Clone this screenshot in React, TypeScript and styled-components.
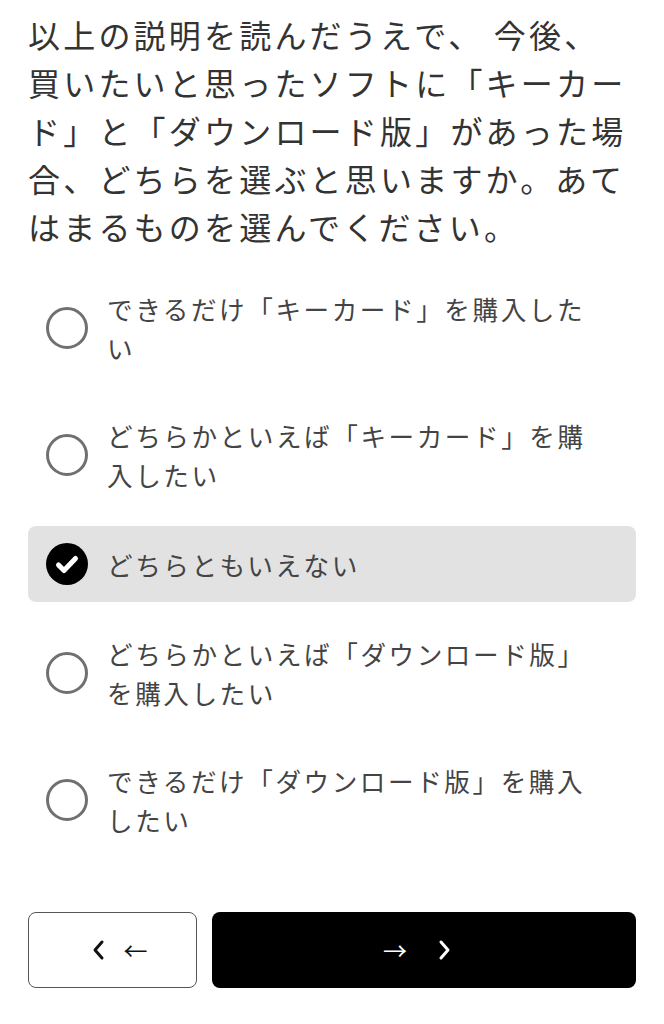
import React, { useState } from "react";
import styled, { createGlobalStyle } from "styled-components";

const Global = createGlobalStyle`
  html, body { margin: 0; padding: 0; background: #ffffff; }
  body { font-family: "Noto Sans CJK JP", "Noto Sans", sans-serif; }
  * { box-sizing: border-box; }
`;

const Page = styled.div`
  width: 664px;
  padding: 10px 28px 36px;
  display: flex;
  flex-direction: column;
`;

const Question = styled.h1`
  margin: 0;
  font-size: 32px;
  line-height: 48px;
  letter-spacing: 3.2px;
  font-weight: 400;
  color: #333333;
  white-space: nowrap;
`;

const Options = styled.div`
  margin-top: 22px;
  display: flex;
  flex-direction: column;
  gap: 15px;
`;

const OptionRow = styled.label<{ $selected: boolean }>`
  display: flex;
  align-items: center;
  gap: 19px;
  padding: 17px 37px 17px 18px;
  border-radius: 8px;
  background: ${(p) => (p.$selected ? "#e2e2e2" : "transparent")};
  cursor: pointer;
`;

const RadioRing = styled.span`
  flex: 0 0 42px;
  width: 42px;
  height: 42px;
  border-radius: 50%;
  border: 3px solid #707070;
`;

const CheckIcon = styled.svg`
  flex: 0 0 42px;
  width: 42px;
  height: 42px;
  display: block;
`;

const OptionText = styled.span`
  flex: 1;
  font-size: 25.6px;
  line-height: 39px;
  letter-spacing: 2.56px;
  color: #444444;
`;

const ButtonBar = styled.div`
  margin-top: 56px;
  display: grid;
  grid-template-columns: 169px 1fr;
  gap: 15px;
`;

const NavButton = styled.button<{ $primary?: boolean; $gap: number }>`
  height: 76px;
  border-radius: 8px;
  border: ${(p) => (p.$primary ? "none" : "1.5px solid #555555")};
  background: ${(p) => (p.$primary ? "#000000" : "#ffffff")};
  color: ${(p) => (p.$primary ? "#ffffff" : "#111111")};
  display: flex;
  align-items: center;
  justify-content: center;
  gap: ${(p) => p.$gap}px;
  font-family: "Noto Sans CJK JP", sans-serif;
  cursor: pointer;
  padding: ${(p) => (p.$primary ? "0 14px 0 0" : "0 0 0 14px")};
`;

const Arrow = styled.span`
  font-size: 24px;
  line-height: 1;
  font-weight: 400;
`;

const Chevron = styled.svg`
  width: 14px;
  height: 22px;
  display: block;
`;

const options = [
  "できるだけ「キーカード」を購入したい",
  "どちらかといえば「キーカード」を購入したい",
  "どちらともいえない",
  "どちらかといえば「ダウンロード版」を購入したい",
  "できるだけ「ダウンロード版」を購入したい",
];

export default function App() {
  const [selected, setSelected] = useState(2);
  return (
    <>
      <Global />
      <Page>
        <Question>
          以上の説明を読んだうえで、 今後、
          <br />
          買いたいと思ったソフトに「キーカー
          <br />
          ド」と「ダウンロード版」があった場
          <br />
          合、どちらを選ぶと思いますか。あて
          <br />
          はまるものを選んでください。
        </Question>
        <Options>
          {options.map((o, i) => (
            <OptionRow key={i} $selected={selected === i} onClick={() => setSelected(i)}>
              {selected === i ? (
                <CheckIcon viewBox="0 0 42 42">
                  <circle cx="21" cy="21" r="21" fill="#000" />
                  <polyline
                    points="12.5,22 18,27.5 29.5,15.5"
                    fill="none"
                    stroke="#fff"
                    strokeWidth="5"
                    strokeLinecap="round"
                    strokeLinejoin="round"
                  />
                </CheckIcon>
              ) : (
                <RadioRing />
              )}
              <OptionText>{o}</OptionText>
            </OptionRow>
          ))}
        </Options>
        <ButtonBar>
          <NavButton $gap={18}>
            <Chevron viewBox="0 0 14 22">
              <polyline points="10,3 3,11 10,19" fill="none" stroke="currentColor" strokeWidth="3" strokeLinecap="round" strokeLinejoin="round" />
            </Chevron>
            <Arrow>←</Arrow>
          </NavButton>
          <NavButton $primary $gap={30}>
            <Arrow>→</Arrow>
            <Chevron viewBox="0 0 14 22">
              <polyline points="4,3 11,11 4,19" fill="none" stroke="currentColor" strokeWidth="3" strokeLinecap="round" strokeLinejoin="round" />
            </Chevron>
          </NavButton>
        </ButtonBar>
      </Page>
    </>
  );
}
